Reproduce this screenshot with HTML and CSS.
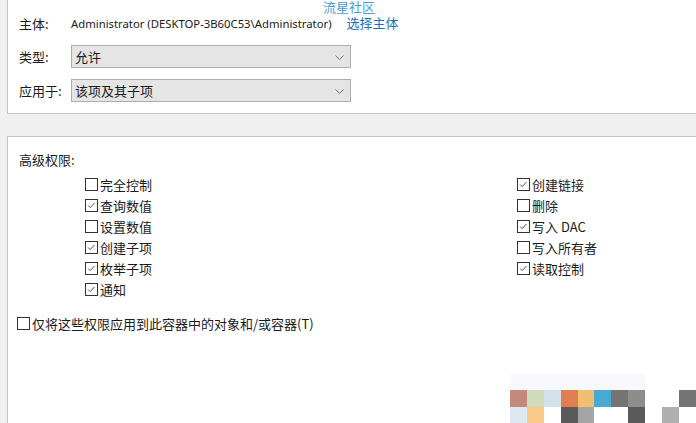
FILE: index.html
```html
<!DOCTYPE html>
<html lang="zh-CN">
<head>
    <meta charset="UTF-8">
    <title>权限项目</title>
    <link rel="stylesheet" href="styles.css">
</head>
<body>
    <div class="watermark">流星社区</div>

    <div class="panel top">
        <div class="row">
            <span class="label">主体:</span>
            <span class="owner">Administrator (DESKTOP-3B60C53\Administrator)</span>
            <a class="link" href="#">选择主体</a>
        </div>
        <div class="row">
            <span class="label">类型:</span>
            <div class="select">允许
                <svg class="arrow" width="9" height="5" viewBox="0 0 9 5"><path d="M0.5 0.5 L4.5 4.5 L8.5 0.5" fill="none" stroke="#707070"/></svg>
            </div>
        </div>
        <div class="row">
            <span class="label">应用于:</span>
            <div class="select">该项及其子项
                <svg class="arrow" width="9" height="5" viewBox="0 0 9 5"><path d="M0.5 0.5 L4.5 4.5 L8.5 0.5" fill="none" stroke="#707070"/></svg>
            </div>
        </div>
    </div>

    <div class="panel perms">
        <div class="title">高级权限:</div>
        <div class="perm-grid">
            <div class="col">
                <label class="check"><span class="cb"></span>完全控制</label>
                <label class="check"><span class="cb on"><svg viewBox="0 0 13 13"><path d="M2.5 6.5 L5 9 L10 3.5" fill="none" stroke="#333"/></svg></span>查询数值</label>
                <label class="check"><span class="cb"></span>设置数值</label>
                <label class="check"><span class="cb on"><svg viewBox="0 0 13 13"><path d="M2.5 6.5 L5 9 L10 3.5" fill="none" stroke="#333"/></svg></span>创建子项</label>
                <label class="check"><span class="cb on"><svg viewBox="0 0 13 13"><path d="M2.5 6.5 L5 9 L10 3.5" fill="none" stroke="#333"/></svg></span>枚举子项</label>
                <label class="check"><span class="cb on"><svg viewBox="0 0 13 13"><path d="M2.5 6.5 L5 9 L10 3.5" fill="none" stroke="#333"/></svg></span>通知</label>
            </div>
            <div class="col">
                <label class="check"><span class="cb on"><svg viewBox="0 0 13 13"><path d="M2.5 6.5 L5 9 L10 3.5" fill="none" stroke="#333"/></svg></span>创建链接</label>
                <label class="check"><span class="cb"></span>删除</label>
                <label class="check"><span class="cb on"><svg viewBox="0 0 13 13"><path d="M2.5 6.5 L5 9 L10 3.5" fill="none" stroke="#333"/></svg></span>写入 DAC</label>
                <label class="check"><span class="cb"></span>写入所有者</label>
                <label class="check"><span class="cb on"><svg viewBox="0 0 13 13"><path d="M2.5 6.5 L5 9 L10 3.5" fill="none" stroke="#333"/></svg></span>读取控制</label>
            </div>
        </div>
        <label class="check only"><span class="cb"></span>仅将这些权限应用到此容器中的对象和/或容器(T)</label>
    </div>

    <!-- 右下角马赛克 -->
    <div class="mosaic">
        <i class="m0"></i><i class="m0"></i><i class="m0"></i><i class="m0"></i><i class="m0"></i><i class="m0"></i><i class="m0"></i><i class="m0"></i><i></i><i></i><i></i>
        <i class="a1"></i><i class="a2"></i><i class="a3"></i><i class="a4"></i><i class="a5"></i><i class="a6"></i><i class="a7"></i><i class="a8"></i><i></i><i></i><i class="a7"></i>
        <i class="b1"></i><i class="b2"></i><i></i><i class="b3"></i><i class="b4"></i><i></i><i></i><i class="b3"></i><i></i><i class="b5"></i><i></i>
    </div>
</body>
</html>
```

FILE: styles.css
```css
body { margin: 0; background: #f0f0f0; font-family: "Noto Sans", "Noto Sans CJK SC", sans-serif; font-size: 13px; color: #1a1a1a; height: 423px; overflow: hidden; position: relative; }
.watermark { position: absolute; left: 323px; top: 1px; line-height: 12px; color: #4d9bdc; font-family: "Noto Sans CJK SC", sans-serif; font-size: 13px; z-index: 1; }
.panel { margin-left: 7px; background: white; border: 1px solid #c4c4c4; border-right: none; }
.top { border-top: none; padding: 12px 0 11px 11px; display: flex; flex-direction: column; gap: 11px; }
.row { display: flex; align-items: center; height: 23px; }
.row:first-child { height: 22px; }
.label { width: 52px; font-family: "Noto Sans CJK SC", sans-serif; }
.owner { font-size: 11.3px; }
.link { color: #1a6fb8; text-decoration: none; margin-left: 15px; font-family: "Noto Sans CJK SC", sans-serif; line-height: 16px; }
.select { width: 275px; height: 21px; background: #e5e5e5; border: 1px solid #adadad; display: flex; align-items: center; padding-left: 3px; position: relative; font-family: "Noto Sans CJK SC", sans-serif; }
.select .arrow { position: absolute; right: 6px; top: 9px; }
.perms { margin-top: 22px; padding: 13px 0 96px 11px; }
.title { font-family: "Noto Sans CJK SC", sans-serif; line-height: 20px; }
.perm-grid { display: grid; grid-template-columns: 432px auto; padding-left: 66px; margin-top: 4px; }
.col { display: flex; flex-direction: column; }
.check { display: flex; align-items: center; height: 21px; font-family: "Noto Sans CJK SC", sans-serif; }
.cb { width: 11px; height: 11px; border: 1px solid #333; background: white; margin-right: 2px; display: inline-block; }
.cb svg { width: 11px; height: 11px; display: block; margin: 0; }
.only { margin-left: -2px; margin-top: 13px; }
.mosaic { position: absolute; left: 510px; top: 374px; display: grid; grid-template-columns: repeat(11, 16.9px); grid-auto-rows: 16.4px; }
.mosaic i { display: block; }
.m0 { background: #f8f9fd; }
.a1 { background: #c4897a; }
.a2 { background: #cfdcbc; }
.a3 { background: #d5e1ea; }
.a4 { background: #e07d53; }
.a5 { background: #f0bf72; }
.a6 { background: #4aa9d3; }
.a7 { background: #747474; }
.a8 { background: #8d8d8d; }
.b1 { background: #dde9f0; }
.b2 { background: #f8c987; }
.b3 { background: #5a5a5a; }
.b4 { background: #a5a5a5; }
.b5 { background: #b0b0b0; }
```
